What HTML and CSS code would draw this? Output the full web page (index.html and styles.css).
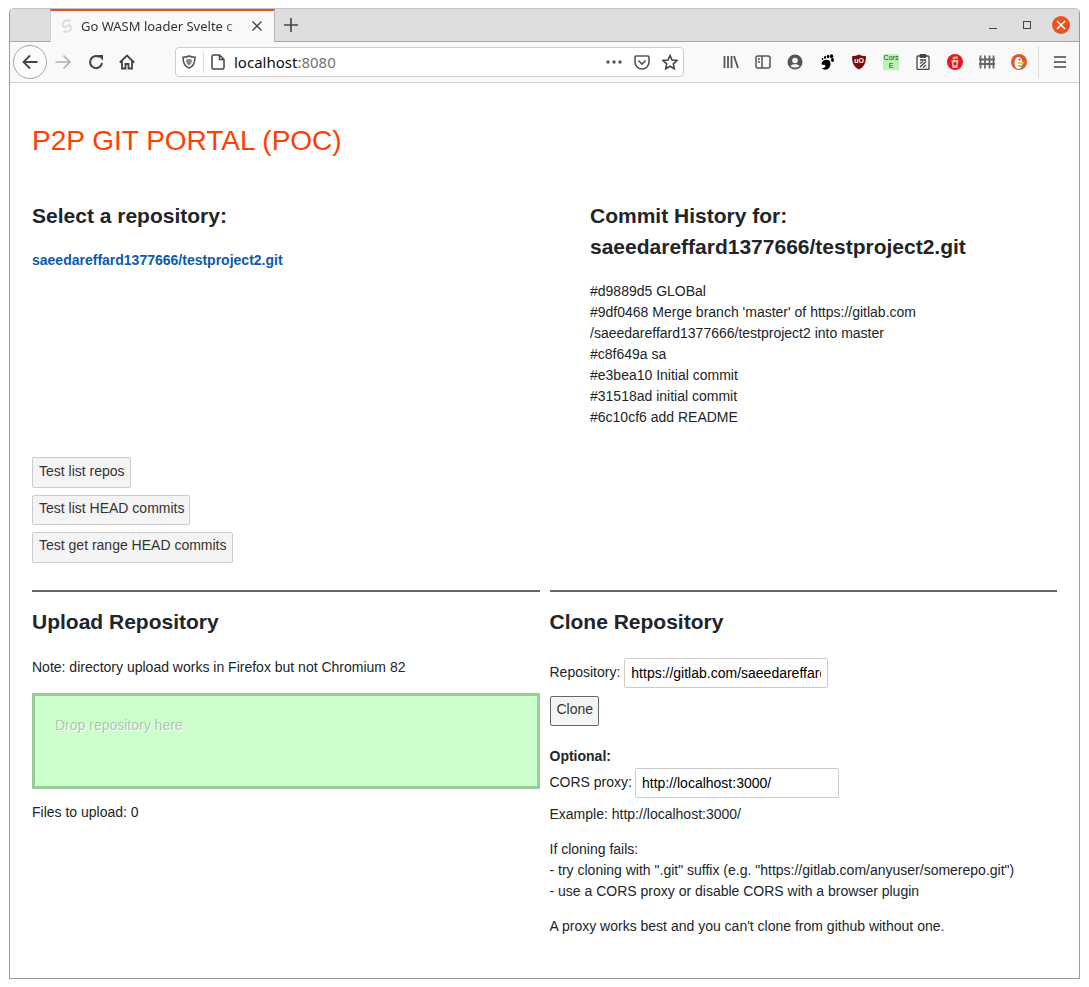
FILE: index.html
```html
<!DOCTYPE html>
<html lang="en">
<head>
<meta charset="utf-8">
<title>Go WASM loader Svelte demo</title>
<link rel="stylesheet" href="styles.css">
</head>
<body>
<div class="window">
  <div class="tabbar">
    <div class="tab-spacer"></div>
    <div class="tab">
      <svg class="tab-favicon" width="16" height="16" viewBox="0 0 16 16" fill="none" stroke="#dcdcdc" stroke-width="2"><path d="M11.5 3.2 C9.5 1.2 5.5 2.2 4 5 C3 7 4 8.5 6 9.5 L10 7 C12 8 12.5 10 11.5 11.5 C10 14 6.5 14.500 4.500 12.800"/></svg>
      <span class="tab-title">Go WASM loader Svelte c</span>
      <svg width="12" height="12" viewBox="0 0 12 12" stroke="#444" stroke-width="1.4"><path d="M1.5 1.5 L10.5 10.5 M10.5 1.5 L1.5 10.5"/></svg>
    </div>
    <svg class="newtab" width="16" height="16" viewBox="0 0 16 16" stroke="#444" stroke-width="1.6"><path d="M8 1 V15 M1 8 H15"/></svg>
    <div class="wincontrols">
      <svg width="10" height="10" viewBox="0 0 10 10" stroke="#444" stroke-width="1"><path d="M1 8.5 H9"/></svg>
      <svg width="10" height="10" viewBox="0 0 10 10" fill="none" stroke="#444" stroke-width="1"><rect x="1.5" y="1.5" width="7" height="7"/></svg>
      <span class="close-btn"><svg width="10" height="10" viewBox="0 0 10 10" stroke="#fff" stroke-width="1.5"><path d="M1 1 L9 9 M9 1 L1 9"/></svg></span>
    </div>
  </div>

  <div class="toolbar">
    <span class="back-btn"><svg width="16" height="16" viewBox="0 0 16 16" fill="none" stroke="#444" stroke-width="1.8"><path d="M15.500 8 H1.500 M8 1.500 L1.500 8 L8 14.500"/></svg></span>
    <svg class="nav-forward" width="18" height="18" viewBox="0 0 18 18" fill="none" stroke="#b0b0b0" stroke-width="1.6"><path d="M1.500 9 H16 M9.500 2.500 L16 9 L9.500 15.500"/></svg>
    <svg class="nav-reload" width="16" height="16" viewBox="0 0 16 16" fill="none" stroke="#444" stroke-width="2"><path d="M14 9 A6 6 0 1 1 11.500 3.200"/><path d="M9.500 1 H15 V6.500 Z" fill="#444" stroke="none"/></svg>
    <svg class="nav-home" width="16" height="16" viewBox="0 0 16 16" fill="none" stroke="#444" stroke-width="1.800"><path d="M0.800 8.500 L8 1.500 L15.200 8.500 M3 7 V14.500 H6.500 V10 H9.500 V14.500 H13 V7"/></svg>

    <div class="urlbar">
      <svg width="14" height="14" viewBox="0 0 14 14" fill="none" stroke="#555" stroke-width="1.6"><path d="M7 1 C9 2 11 2.200 13 2.200 C13 8 11 11.500 7 13 C3 11.500 1 8 1 2.200 C3 2.200 5 2 7 1 Z"/><path d="M7 4 C8 4.500 9 4.600 10 4.600 C10 7.500 9 9.500 7 10.500 C5 9.500 4 7.500 4 4.600 C5 4.600 6 4.500 7 4 Z" fill="#888" stroke="none"/></svg>
      <span class="url-sep"></span>
      <svg width="14" height="16" viewBox="0 0 14 16" fill="none" stroke="#444" stroke-width="1.5"><path d="M2.500 1 H8.500 L13 5.500 V13.500 A1.500 1.500 0 0 1 11.500 15 H2.500 A1.500 1.500 0 0 1 1 13.500 V2.500 A1.500 1.500 0 0 1 2.500 1 Z M8.500 1 V5.500 H13"/></svg>
      <span class="url-text">localhost<span class="url-port">:8080</span></span>
      <svg class="url-dots" width="16" height="4" viewBox="0 0 16 4" fill="#555"><circle cx="2" cy="2" r="1.700"/><circle cx="8" cy="2" r="1.700"/><circle cx="14" cy="2" r="1.700"/></svg>
      <svg class="url-pocket" width="16" height="15" viewBox="0 0 16 15" fill="none" stroke="#555" stroke-width="1.600"><path d="M2 1 H14 A1 1 0 0 1 15 2 V7 A7 7 0 0 1 1 7 V2 A1 1 0 0 1 2 1 Z M4.500 5.500 L8 9 L11.500 5.500"/></svg>
      <svg class="url-star" width="16" height="16" viewBox="0 0 16 16" fill="none" stroke="#444" stroke-width="1.600"><path d="M8 1.500 L10 6 L15 6.500 L11.300 9.800 L12.300 14.700 L8 12.200 L3.700 14.700 L4.700 9.800 L1 6.500 L6 6 Z"/></svg>
    </div>

    <div class="extensions">
      <svg width="16" height="16" viewBox="0 0 16 16" fill="none" stroke="#555" stroke-width="1.800"><path d="M1.500 2 V14 M5 2 V14 M8.500 2 V14 M11 2 L15 14"/></svg>
      <svg width="16" height="14" viewBox="0 0 16 14" fill="none" stroke="#555" stroke-width="1.500"><rect x="1" y="1" width="14" height="12" rx="2"/><path d="M7 1 V13 M3 4 H5 M3 7 H5"/></svg>
      <svg width="16" height="16" viewBox="0 0 16 16"><circle cx="8" cy="8" r="7.500" fill="#555"/><circle cx="8" cy="6.500" r="2.800" fill="#f9f9fa"/><path d="M3.500 12 C5 9.800 11 9.800 12.500 12 C10.500 14 5.500 14 3.500 12 Z" fill="#f9f9fa"/></svg>
      <svg width="16" height="16" viewBox="0 0 16 16" fill="#000"><path d="M3 8 C5 5.500 10 5 11 7.500 C12 10 11.500 12 10 14 C8 16.500 4 16 3 14 C4.500 14 6 14 6.500 12.500 C7 11 5 10.500 3.500 11 C2.500 10.500 2.300 9 3 8 Z"/><ellipse cx="13.500" cy="6" rx="1.500" ry="2"/><ellipse cx="12.500" cy="2.300" rx="1.700" ry="2"/><ellipse cx="9" cy="2.500" rx="1.300" ry="1.800"/><ellipse cx="6" cy="3.500" rx="1" ry="1.400"/><ellipse cx="3.500" cy="5" rx="0.800" ry="1.100"/></svg>
      <span class="ublock"><svg width="16" height="16" viewBox="0 0 16 16"><path d="M8 0.500 C10 1.800 12.500 2.200 15 2.200 C15 9 13 13.200 8 15.500 C3 13.200 1 9 1 2.200 C3.500 2.200 6 1.800 8 0.500 Z" fill="#7c0c0c"/></svg><span class="ublock-text">uO</span></span>
      <span class="cors-badge">Cors<br>E</span>
      <svg width="16" height="16" viewBox="0 0 16 16" fill="none" stroke="#444" stroke-width="1.300"><rect x="2" y="2" width="12" height="13.500" rx="1"/><rect x="5.500" y="0.700" width="5" height="2.500" fill="#444"/><path d="M5 6 H11 M5 13 L11 7.500 M5 9.500 L8 7.500 M8 13.500 L11 11"/></svg>
      <svg width="16" height="16" viewBox="0 0 16 16"><circle cx="8" cy="8" r="8" fill="#e81224"/><path d="M4.500 6 H11.500 L10.500 14 H5.500 Z" fill="#f3b7bb"/><circle cx="8" cy="9.800" r="1.700" fill="#a33"/><circle cx="7" cy="4" r="1.500" fill="#f2c14e"/><circle cx="9.500" cy="3.500" r="1.500" fill="#f2c14e"/></svg>
      <svg width="16" height="14" viewBox="0 0 16 14" fill="none" stroke="#666" stroke-width="1.800"><path d="M1.500 0.500 V13.500 M6 0.500 V13.500 M10.500 0.500 V13.500 M14.500 0.500 V13.500 M0 4.500 H16 M0 9 H16"/></svg>
      <svg width="16" height="16" viewBox="0 0 16 16"><circle cx="8" cy="8" r="8" fill="#de5833"/><ellipse cx="7.500" cy="9" rx="4" ry="6" fill="#fff"/><circle cx="8.500" cy="5.500" r="1" fill="#2d4f8e"/><path d="M7 8 H14 L11.500 10 H7 Z" fill="#fdd20a"/><path d="M7 11 L11.500 11.500 V13 L7 12.500 Z" fill="#65bc46"/></svg>
    </div>
    <span class="toolbar-sep"></span>
    <svg class="menu-icon" width="14" height="12" viewBox="0 0 14 12" stroke="#444" stroke-width="1.700"><path d="M1 1 H13 M1 6 H13 M1 11 H13"/></svg>
  </div>

  <main class="page">
    <h1 class="title">P2P GIT PORTAL (POC)</h1>

    <div class="repo-row">
      <section>
        <h2 class="heading">Select a repository:</h2>
        <a class="repo-link" href="#">saeedareffard1377666/testproject2.git</a>
      </section>
      <section>
        <h2 class="heading">Commit History for:<br>saeedareffard1377666/testproject2.git</h2>
        <div class="commits">
          <div>#d9889d5 GLOBal</div>
          <div>#9df0468 Merge branch 'master' of https://gitlab.com<br>/saeedareffard1377666/testproject2 into master</div>
          <div>#c8f649a sa</div>
          <div>#e3bea10 Initial commit</div>
          <div>#31518ad initial commit</div>
          <div>#6c10cf6 add README</div>
        </div>
      </section>
    </div>

    <div class="test-buttons">
      <button class="btn">Test list repos</button>
      <button class="btn">Test list HEAD commits</button>
      <button class="btn">Test get range HEAD commits</button>
    </div>

    <div class="lower-row">
      <section class="panel">
        <h2 class="heading">Upload Repository</h2>
        <p class="note">Note: directory upload works in Firefox but not Chromium 82</p>
        <div class="dropzone">Drop repository here</div>
        <p class="files-count">Files to upload: 0</p>
      </section>
      <section class="panel">
        <h2 class="heading">Clone Repository</h2>
        <div class="field-line repo-line">
          <label>Repository:</label>
          <input class="text-input" type="text" value="https://gitlab.com/saeedareffard1377666/testproject2">
        </div>
        <button class="btn btn-clone">Clone</button>
        <div class="optional">Optional:</div>
        <div class="field-line proxy-line">
          <label>CORS proxy:</label>
          <input class="text-input" type="text" value="http://localhost:3000/">
        </div>
        <p class="example">Example: http://localhost:3000/</p>
        <p class="help">If cloning fails:<br>- try cloning with ".git" suffix (e.g. "https://gitlab.com/anyuser/somerepo.git")<br>- use a CORS proxy or disable CORS with a browser plugin</p>
        <p class="help">A proxy works best and you can't clone from github without one.</p>
      </section>
    </div>
  </main>
</div>
</body>
</html>
```

FILE: styles.css
```css
* {
	box-sizing: border-box;
}

html, body {
	margin: 0;
	padding: 0;
	background: #fff;
}

body {
	font-family: "Liberation Sans", Arial, sans-serif;
	font-size: 14px;
	line-height: 21px;
	color: #212529;
}

.window {
	width: 1071px;
	height: 971px;
	margin: 8px 0 0 9px;
	border: 1px solid #9a9a9a;
	border-top-color: #c4c4c4;
	border-radius: 5px 5px 0 0;
	background: #fff;
	overflow: hidden;
}

/* browser chrome */
.tabbar {
	display: flex;
	align-items: center;
	height: 33px;
	background: #dedede;
	border-bottom: 1px solid #a8a8a8;
	font-family: "Noto Sans", "Open Sans", sans-serif;
}

.tab-spacer {
	width: 40px;
}

.tab {
	display: flex;
	align-items: center;
	width: 225px;
	height: 33px;
	padding: 0 11px 0 8px;
	background: #f9f9fa;
	border-top: 2px solid #e95420;
	border-right: 1px solid #b4b4b4;
	border-left: 1px solid #cfcfcf;
	font-size: 13px;
	color: #333;
}

.tab-favicon {
	flex: none;
}

.tab-title {
	flex: 1;
	margin-left: 6px;
	white-space: nowrap;
	-webkit-mask-image: linear-gradient(to right, #000 84%, transparent 99%);
	mask-image: linear-gradient(to right, #000 84%, transparent 99%);
}

.newtab {
	margin-left: 8px;
}

.wincontrols {
	display: flex;
	align-items: center;
	gap: 24px;
	margin-left: auto;
	padding-right: 9px;
}

.close-btn {
	display: flex;
	align-items: center;
	justify-content: center;
	width: 18px;
	height: 18px;
	margin-left: -4px;
	border-radius: 50%;
	background: #e95420;
}

.toolbar {
	display: flex;
	align-items: center;
	height: 41px;
	padding-left: 3px;
	background: #f9f9fa;
	border-bottom: 1px solid #cfcfcf;
}

.back-btn {
	display: flex;
	align-items: center;
	justify-content: center;
	width: 34px;
	height: 34px;
	border: 1px solid #a8a8a8;
	border-radius: 50%;
	background: #fcfcfc;
}

.nav-forward {
	margin-left: 7px;
}

.nav-reload {
	margin-left: 16px;
}

.nav-home {
	margin-left: 15px;
}

.urlbar {
	display: flex;
	align-items: center;
	width: 509px;
	height: 30px;
	margin-left: 40px;
	padding: 0 5px 0 6px;
	background: #fff;
	border: 1px solid #cdcdcd;
	border-radius: 4px;
	font-family: "Noto Sans", "Open Sans", sans-serif;
	font-size: 15px;
}

.url-sep {
	width: 1px;
	height: 22px;
	margin: 0 7px;
	background: #ddd;
}

.url-text {
	flex: 1;
	margin-left: 9px;
	color: #0c0c0d;
}

.url-port {
	color: #737373;
}

.url-dots {
	margin-right: 12px;
}

.url-star {
	margin-left: 12px;
}

.extensions {
	display: flex;
	align-items: center;
	gap: 16px;
	margin-left: 39px;
}

.ublock {
	display: flex;
	position: relative;
	width: 16px;
	height: 16px;
}

.ublock-text {
	position: absolute;
	inset: 0;
	font-size: 7px;
	font-weight: bold;
	line-height: 14px;
	text-align: center;
	color: #fff;
}

.cors-badge {
	width: 16px;
	height: 16px;
	background: #b9f7b0;
	font-size: 7px;
	line-height: 8px;
	text-align: center;
	color: #333;
}

.toolbar-sep {
	width: 1px;
	height: 32px;
	margin-left: 11px;
	background: #dcdcdc;
}

.menu-icon {
	margin-left: 14px;
}

/* page */
.page {
	padding: 22px 22px 0;
}

.title {
	margin: 15px 0 0;
	font-size: 28px;
	font-weight: 400;
	line-height: 42px;
	color: #ff3e00;
}

.heading {
	margin: 0;
	font-size: 21px;
	font-weight: 700;
	line-height: 31px;
}

.repo-row {
	display: grid;
	grid-template-columns: 558px 1fr;
	margin-top: 38px;
}

.repo-link {
	display: block;
	margin-top: 19px;
	font-weight: 700;
	color: #0b5ba8;
	text-decoration: none;
}

.commits {
	margin-top: 19px;
}

.test-buttons {
	display: flex;
	flex-direction: column;
	align-items: flex-start;
	gap: 7px;
	margin-top: 29.4px;
}

.btn {
	height: 30.4px;
	padding: 0 5px 4px 6px;
	background: #f4f4f4;
	border: 1px solid #ccc;
	border-radius: 2px;
	font-family: inherit;
	font-size: 14px;
	color: #333;
}

.lower-row {
	display: grid;
	grid-template-columns: 1fr 1fr;
	gap: 10px;
	margin-top: 27.5px;
}

.panel {
	padding-top: 14px;
	border-top: 2px solid #666;
}

.note {
	margin: 20px 0 0;
}

.dropzone {
	height: 96px;
	margin-top: 15px;
	padding: 19px 20px;
	background: #cfc;
	border: 3px solid #9c9;
	color: #a9c9a9;
	text-shadow: 1px 1px 0 #fff;
}

.files-count {
	margin: 13px 0 0;
}

.field-line {
	display: flex;
	gap: 3px;
}

.field-line label {
	padding-top: 4px;
}

.repo-line {
	gap: 4px;
	margin-top: 21px;
}

.proxy-line {
	margin-top: 1px;
}

.text-input {
	width: 204px;
	height: 30px;
	padding: 0 6px;
	background: #fff;
	border: 1px solid #ccc;
	border-radius: 2px;
	font-family: inherit;
	font-size: 14px;
	color: #000;
}

.btn-clone {
	display: block;
	margin-top: 8px;
	border-color: #666;
}

.optional {
	margin-top: 20px;
	font-weight: 700;
}

.example {
	margin: 6px 0 0;
}

.help {
	margin: 14px 0 0;
}
```
